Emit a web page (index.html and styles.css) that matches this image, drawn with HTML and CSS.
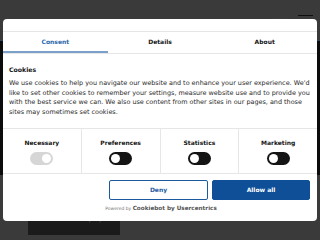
FILE: index.html
```html
<!DOCTYPE html>
<html>
<head>
	<title>Cookie consent</title>
	<meta charset=utf-8>
	<meta name=viewport content="width=device-width, initial-scale=1">
	<link rel="stylesheet" href="styles.css">
</head>
<body>
	<div class="page">
		<div class="topbar">
			<span class="menu-label">MENU</span>
			<span class="burger"></span>
		</div>
		<div class="hero"></div>
		<div class="hero-foot">
			<a class="project-btn">Read about the project</a>
		</div>
	</div>

	<div class="dialog">
		<div class="dlg-head"></div>
		<div class="tabs">
			<a class="tab active">Consent</a>
			<a class="tab">Details</a>
			<a class="tab">About</a>
		</div>
		<div class="dlg-body">
			<h2 class="dlg-title">Cookies</h2>
			<p class="dlg-text">We use cookies to help you navigate our website and to enhance your user experience. We'd like to set other cookies to remember your settings, measure website use and to provide you with the best service we can. We also use content from other sites in our pages, and those sites may sometimes set cookies.</p>
		</div>
		<div class="levels">
			<div class="level">
				<span class="level-name">Necessary</span>
				<span class="switch disabled"><span class="knob"></span></span>
			</div>
			<div class="level">
				<span class="level-name">Preferences</span>
				<span class="switch"><span class="knob"></span></span>
			</div>
			<div class="level">
				<span class="level-name">Statistics</span>
				<span class="switch"><span class="knob"></span></span>
			</div>
			<div class="level">
				<span class="level-name">Marketing</span>
				<span class="switch"><span class="knob"></span></span>
			</div>
		</div>
		<div class="actions">
			<button class="btn btn-deny">Deny</button>
			<button class="btn btn-allow">Allow all</button>
		</div>
		<div class="powered">Powered by <b>Cookiebot by Usercentrics</b></div>
	</div>
</body>
</html>
```

FILE: styles.css
```css
	body{
		margin: 0;
		font-family: "DejaVu Sans", Verdana, sans-serif;
		background: #3a3a3a;
		overflow: hidden;
	}
	.page{
		width: 320px;
		height: 240px;
		display: flex;
		flex-direction: column;
	}
	.topbar{
		height: 40px;
		display: flex;
		justify-content: flex-end;
		align-items: flex-start;
		padding: 15px 7px 0 0;
		box-sizing: border-box;
		gap: 8px;
	}
	.menu-label{
		font-size: 5px;
		color: #4a4a4a;
		letter-spacing: 1px;
		margin-top: 2px;
	}
	.burger{
		width: 15px;
		height: 1px;
		background: #0e0e0e;
	}
	.hero{
		height: 135px;
		background: #0c0c0c;
		border-top: 1px solid #2c4660;
		box-sizing: border-box;
	}
	.hero-foot{
		flex: 1;
		padding: 28px 0 0 28px;
	}
	.project-btn{
		display: inline-block;
		background: #1b1b1b;
		color: #5a5a5a;
		font-size: 6.6px;
		padding: 12px 8px;
	}

	/* consent dialog */
	.dialog{
		position: absolute;
		left: 3px;
		top: 19px;
		width: 314px;
		height: 202px;
		background: #fff;
		border-radius: 4px;
		display: flex;
		flex-direction: column;
		overflow: hidden;
		color: #141414;
	}
	.dlg-head{
		height: 12px;
		border-bottom: 1px solid #e6e6e6;
	}
	.tabs{
		display: flex;
		border-bottom: 1px solid #e6e6e6;
	}
	.tab{
		flex: 1;
		text-align: center;
		font-size: 6px;
		font-weight: 700;
		line-height: 19px;
		border-bottom: 2px solid transparent;
	}
	.tab.active{
		color: #2a68ab;
		border-bottom-color: #7ba1cb;
	}
	.dlg-body{
		padding: 11px 6px 10px;
		border-bottom: 1px solid #e6e6e6;
	}
	.dlg-title{
		margin: 0 0 4px;
		font-size: 6.2px;
		line-height: 10px;
	}
	.dlg-text{
		margin: 0;
		font-size: 6.45px;
		line-height: 9.7px;
		color: #2a2a2a;
	}
	.levels{
		display: flex;
		border-bottom: 1px solid #e6e6e6;
		height: 44px;
	}
	.level{
		flex: 1;
		display: flex;
		flex-direction: column;
		align-items: center;
		padding-top: 9px;
		gap: 5px;
		border-left: 1px solid #e6e6e6;
	}
	.level:first-child{
		border-left: 0;
	}
	.level-name{
		font-size: 6px;
		font-weight: 700;
		line-height: 9px;
	}
	.switch{
		width: 23px;
		height: 13px;
		border-radius: 7px;
		background: #141414;
		display: flex;
		align-items: center;
		padding: 0 2px;
		box-sizing: border-box;
	}
	.knob{
		width: 9px;
		height: 9px;
		border-radius: 50%;
		background: #fff;
	}
	.switch.disabled{
		background: #d6d6d6;
		justify-content: flex-end;
	}
	.actions{
		display: flex;
		justify-content: flex-end;
		gap: 4px;
		padding: 6px 7px 0;
	}
	.btn{
		height: 20px;
		font-family: inherit;
		font-size: 6px;
		font-weight: 700;
		border-radius: 2px;
		padding: 0;
	}
	.btn-deny{
		width: 99px;
		background: #fff;
		color: #1c5a9f;
		border: 1.5px solid #1c5a9f;
	}
	.btn-allow{
		width: 98px;
		background: #0e4f97;
		color: #fff;
		border: 1.5px solid #0e4f97;
	}
	.powered{
		text-align: center;
		font-size: 4.5px;
		color: #777;
		margin-top: 5px;
		padding-left: 2px;
	}
	.powered b{
		font-size: 5.7px;
		color: #555;
	}
```
